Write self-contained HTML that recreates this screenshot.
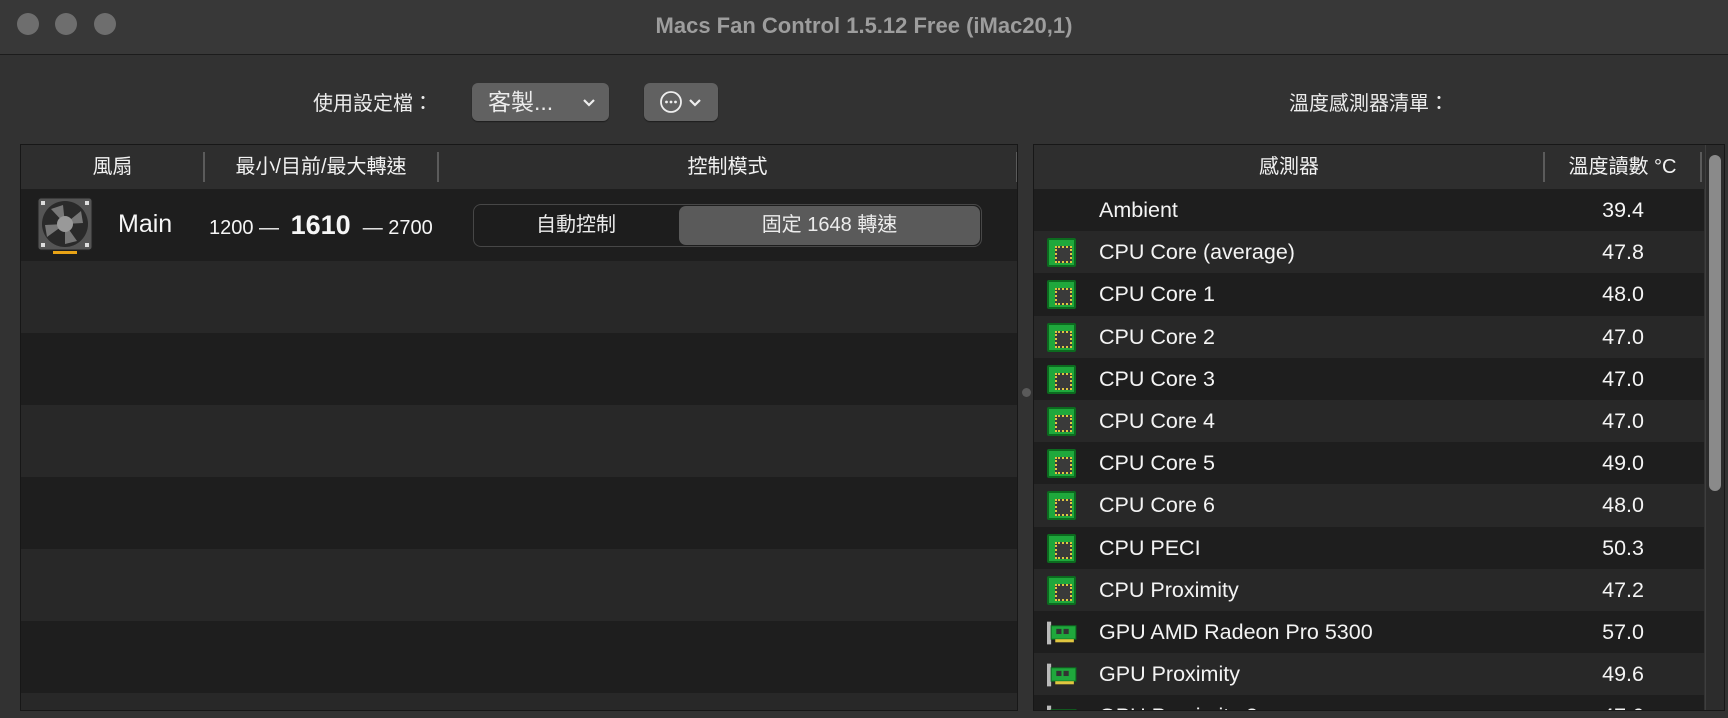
<!DOCTYPE html>
<html><head><meta charset="utf-8"><style>
*{margin:0;padding:0;box-sizing:border-box}
html,body{width:1728px;height:718px;overflow:hidden}
body{background:#323232;font-family:"Liberation Sans","Noto Sans CJK TC",sans-serif;color:#ececec;position:relative}
.a{position:absolute}
.tb{left:0;top:0;width:1728px;height:55px;background:#383838;border-bottom:1px solid #1c1c1c}
.dot{width:22px;height:22px;border-radius:50%;background:#6e6e6e;top:13px}
.title{top:0;left:0;width:1728px;height:55px;line-height:52px;text-align:center;font-weight:bold;font-size:22px;color:#9d9d9d}
.btn{background:#616161;border-radius:6px;box-shadow:0 1px 1px #1e1e1e}
.tbl{border:1px solid #171717;overflow:hidden}
.hdr{position:absolute;left:0;right:0;top:0;height:44px;background:#2e2e2e}
.sep{position:absolute;top:7px;width:2px;height:30px;background:#5b5b5b}
.hl{position:absolute;top:0;height:44px;line-height:44px;font-size:20px;color:#f2f2f2;text-align:center}
.row{position:absolute;left:0;right:0}
.d{background:#1e1e1e}.m{background:#282828}
.sr{height:42.2px;line-height:42px;font-size:21.5px;color:#f4f4f4}
.sr .n{position:absolute;left:65px}
.sr .v{position:absolute;right:60px}
.chip{position:absolute;left:13px;top:7px;width:29px;height:29px;background:#1fa83c;border:2px solid #0c6b1f;border-radius:2px}
.chip:after{content:"";position:absolute;left:6px;top:6px;width:13px;height:13px;background:#3a3a3a;border:2px dotted #e0c640}
.gpu{position:absolute;left:13px;top:10px;width:31px;height:24px}
</style></head><body>
<div class="a tb"></div>
<div class="a dot" style="left:17px"></div>
<div class="a dot" style="left:55px"></div>
<div class="a dot" style="left:94px"></div>
<div class="a title">Macs Fan Control 1.5.12 Free (iMac20,1)</div>

<div class="a" style="left:313px;top:92px;font-size:20px;line-height:24px">使用設定檔：</div>
<div class="a btn" style="left:472px;top:83px;width:137px;height:38px;font-size:23px;line-height:38px;padding-left:16px">客製...<svg width="14" height="10" style="position:absolute;right:13px;top:15px"><path d="M2 2l5 5 5-5" fill="none" stroke="#eee" stroke-width="2.2"/></svg></div>
<div class="a btn" style="left:644px;top:83px;width:74px;height:38px">
<svg width="74" height="38" style="position:absolute;left:0;top:0"><circle cx="27" cy="19" r="10" fill="none" stroke="#eee" stroke-width="1.8"/><circle cx="22.5" cy="19" r="1.4" fill="#eee"/><circle cx="27" cy="19" r="1.4" fill="#eee"/><circle cx="31.5" cy="19" r="1.4" fill="#eee"/><path d="M46 17l5 5 5-5" fill="none" stroke="#eee" stroke-width="2.2"/></svg></div>
<div class="a" style="left:1289px;top:92px;font-size:20px;line-height:24px">溫度感測器清單：</div>

<!-- left table -->
<div class="a tbl" style="left:20px;top:144px;width:998px;height:567px">
<div class="hdr"></div>
<div class="sep" style="left:182px"></div><div class="sep" style="left:416px"></div><div class="sep" style="left:995px"></div>
<div class="hl" style="left:0;width:183px">風扇</div>
<div class="hl" style="left:184px;width:232px">最小/目前/最大轉速</div>
<div class="hl" style="left:418px;width:577px">控制模式</div>
<div class="row d" style="top:44px;height:72px"></div>
<div class="row m" style="top:116px;height:72px"></div>
<div class="row d" style="top:188px;height:72px"></div>
<div class="row m" style="top:260px;height:72px"></div>
<div class="row d" style="top:332px;height:72px"></div>
<div class="row m" style="top:404px;height:72px"></div>
<div class="row d" style="top:476px;height:72px"></div>
<div class="row m" style="top:548px;height:72px"></div>
<svg class="a" style="left:16px;top:52px" width="56" height="58"><rect x="1" y="1" width="54" height="52" rx="3" fill="#555" stroke="#222"/><circle cx="28" cy="27" r="23" fill="#2a2a2a"/><g fill="#777"><path d="M28 27L14 12L26 8Z"/><path d="M28 27L44 14L46 26Z"/><path d="M28 27L40 44L28 47Z"/><path d="M28 27L10 40L8 28Z"/></g><circle cx="28" cy="27" r="8" fill="#999"/><rect x="4" y="4" width="4" height="4" fill="#ddd"/><rect x="48" y="4" width="4" height="4" fill="#ddd"/><rect x="4" y="46" width="4" height="4" fill="#ddd"/><rect x="48" y="46" width="4" height="4" fill="#ddd"/><rect x="16" y="54" width="24" height="3" fill="#e8a316"/></svg>
<div class="a" style="left:97px;top:64px;font-size:25px;line-height:30px;color:#f6f6f6">Main</div>
<div class="a" style="left:188px;top:44px;width:228px;height:72px;overflow:hidden;white-space:nowrap;line-height:72px;color:#f6f6f6"><span style="font-size:20px">1200 — </span><b style="font-size:27px;margin:0 12px 0 6px">1610</b><span style="font-size:20px">— 2700</span></div>
<div class="a" style="left:452px;top:59px;width:509px;height:43px;border:1px solid #474747;border-radius:8px;background:#1d1d1d"></div>
<div class="a" style="left:658px;top:61px;width:301px;height:39px;border-radius:7px;background:#5a5a5a"></div>
<div class="a" style="left:452px;top:59px;width:206px;height:43px;line-height:43px;text-align:center;font-size:20px">自動控制</div>
<div class="a" style="left:658px;top:59px;width:301px;height:43px;line-height:43px;text-align:center;font-size:20px">固定 1648 轉速</div>
</div>
<div class="a" style="left:1022px;top:388px;width:9px;height:9px;border-radius:50%;background:#5a5a5a"></div>

<!-- right table -->
<div class="a tbl" style="left:1033px;top:144px;width:692px;height:567px">
<div class="hdr"></div>
<div class="sep" style="left:509px"></div><div class="sep" style="left:666px"></div>
<div class="hl" style="left:0;width:510px">感測器</div>
<div class="hl" style="left:511px;width:155px">溫度讀數 °C</div>
<div id="rows"></div>
<div class="a" style="left:671px;top:0;width:20px;height:567px;background:#2c2c2c;border-left:1px solid #3e3e3e"></div>
<div class="a" style="left:675px;top:10px;width:12px;height:336px;border-radius:6px;background:#8a8a8a"></div>
</div>
<script>
var d=[["Ambient","39.4",0],["CPU Core (average)","47.8",1],["CPU Core 1","48.0",1],["CPU Core 2","47.0",1],["CPU Core 3","47.0",1],["CPU Core 4","47.0",1],["CPU Core 5","49.0",1],["CPU Core 6","48.0",1],["CPU PECI","50.3",1],["CPU Proximity","47.2",1],["GPU AMD Radeon Pro 5300","57.0",2],["GPU Proximity","49.6",2],["GPU Proximity 2","47.6",2]];
var g='<svg class="gpu" viewBox="0 0 30 22"><rect x="0" y="0" width="4" height="22" fill="#bbb"/><rect x="4" y="4" width="24" height="13" fill="#1fa83c" stroke="#0c6b1f"/><rect x="9" y="7" width="5" height="5" fill="#333"/><rect x="16" y="7" width="5" height="5" fill="#333"/><rect x="8" y="17" width="18" height="3" fill="#e0c640"/></svg>';
var h='';d.forEach(function(r,i){h+='<div class="row sr '+(i%2?'m':'d')+'" style="top:'+(44+i*42.2)+'px;right:20px">'+(r[2]==1?'<div class="chip"></div>':r[2]==2?g:'')+'<span class="n">'+r[0]+'</span><span class="v">'+r[1]+'</span></div>'});
document.getElementById('rows').innerHTML=h;
</script>
</body></html>
